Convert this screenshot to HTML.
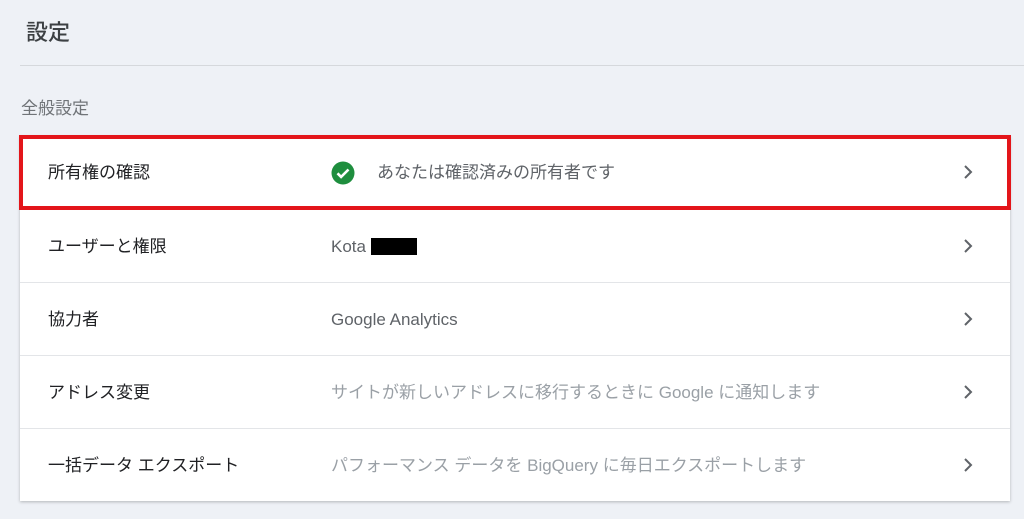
<!DOCTYPE html>
<html><head><meta charset="utf-8"><style>
body{margin:0;width:1024px;height:519px;background:#eef1f6;font-family:"Liberation Sans","Noto Sans CJK JP",sans-serif;position:relative;overflow:hidden}
.h{position:absolute;left:26px;top:15px;font-size:22px;color:#3c4043;font-weight:500}
.line{position:absolute;left:20px;right:0;top:65px;height:1px;background:#d5d8dc}
.sub{position:absolute;left:21px;top:94px;font-size:17px;color:#707478}
.card{position:absolute;left:20px;top:136px;width:990px;height:365px;background:#fff;box-shadow:0 1px 3px rgba(0,0,0,.25)}
.row{position:absolute;left:0;width:990px;height:73px;border-top:1px solid #e3e5e8}
.row:first-child{border-top:none}
.l{position:absolute;left:28px;top:0;line-height:73px;font-size:17px;color:#202124}
.v{position:absolute;left:311px;top:0;line-height:73px;font-size:17px;color:#5f6368}
.v.g{color:#9aa0a6}
.c{position:absolute;left:942px;top:28px}
.red{position:absolute;left:19px;top:135px;width:984px;height:67px;border:4px solid #e3151a}
</style></head><body>
<div class="h">設定</div>
<div class="line"></div>
<div class="sub">全般設定</div>
<div class="card">
<div class="row" style="top:0"><div class="l">所有権の確認</div>
<svg style="position:absolute;left:311px;top:25px" width="24" height="24" viewBox="0 0 24 24"><circle cx="12" cy="12" r="11.5" fill="#1e8e3e"/><path d="M6.5 12.3l3.6 3.6 7.4-7.4" stroke="#fff" stroke-width="2.6" fill="none"/></svg>
<div class="v" style="left:357px">あなたは確認済みの所有者です</div><svg class="c" width="12" height="16" viewBox="0 0 12 16"><path d="M3 2l6 6-6 6" stroke="#5f6368" stroke-width="2" fill="none"/></svg></div>
<div class="row" style="top:73px"><div class="l">ユーザーと権限</div><div class="v">Kota <span style="display:inline-block;width:46px;height:17px;background:#000;vertical-align:-3px"></span></div><svg class="c" width="12" height="16" viewBox="0 0 12 16"><path d="M3 2l6 6-6 6" stroke="#5f6368" stroke-width="2" fill="none"/></svg></div>
<div class="row" style="top:146px"><div class="l">協力者</div><div class="v">Google Analytics</div><svg class="c" width="12" height="16" viewBox="0 0 12 16"><path d="M3 2l6 6-6 6" stroke="#5f6368" stroke-width="2" fill="none"/></svg></div>
<div class="row" style="top:219px"><div class="l">アドレス変更</div><div class="v g">サイトが新しいアドレスに移行するときに Google に通知します</div><svg class="c" width="12" height="16" viewBox="0 0 12 16"><path d="M3 2l6 6-6 6" stroke="#5f6368" stroke-width="2" fill="none"/></svg></div>
<div class="row" style="top:292px"><div class="l">一括データ エクスポート</div><div class="v g">パフォーマンス データを BigQuery に毎日エクスポートします</div><svg class="c" width="12" height="16" viewBox="0 0 12 16"><path d="M3 2l6 6-6 6" stroke="#5f6368" stroke-width="2" fill="none"/></svg></div>
</div>
<div class="red"></div>
</body></html>
